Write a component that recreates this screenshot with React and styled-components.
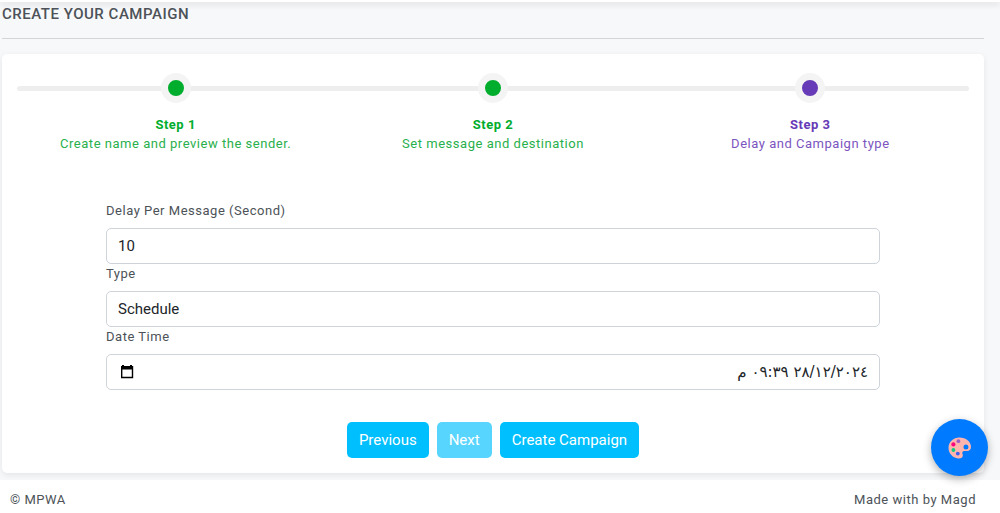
import React, { useState } from "react";
import styled, { createGlobalStyle, ThemeProvider } from "styled-components";

const theme = {
  colors: {
    page: "#f7f8fa",
    text: "#4c5258",
    input: "#212529",
    border: "#ced4da",
    done: "#00ad2d",
    doneText: "#28b04c",
    active: "#673ab7",
    activeText: "#7d55c0",
    info: "#00bfff",
  },
};

const GlobalStyle = createGlobalStyle`
  *,
  *::before,
  *::after {
    box-sizing: border-box;
  }

  body {
    margin: 0;
    background-color: ${theme.colors.page};
    color: ${theme.colors.text};
    font-family: Roboto, "DejaVu Sans", sans-serif;
    font-size: 13px;
    line-height: 19px;
    letter-spacing: 0.04em;
  }
`;

const Page = styled.div`
  display: flex;
  flex-direction: column;
  min-height: 100vh;
`;

const TopBar = styled.header`
  height: 2px;
  background-color: white;
  box-shadow: 0 2px 6px rgba(0, 0, 0, 0.2);
`;

const Content = styled.main`
  flex: 1;
  padding: 2px 16px 7px 2px;
`;

const PageTitle = styled.h6`
  margin: 0;
  padding-bottom: 14px;
  border-bottom: 1px solid #d3d6d9;
  font-size: 15px;
  line-height: 20px;
  font-weight: 500;
  text-transform: uppercase;
`;

const Card = styled.section`
  margin-top: 15px;
  padding: 19px 15px 15px;
  border-radius: 5px;
  background-color: white;
  box-shadow: 0 2px 6px rgba(0, 0, 0, 0.08);
`;

const StepList = styled.ol`
  position: relative;
  display: grid;
  grid-template-columns: repeat(3, 1fr);
  margin: 0;
  padding: 0;
  list-style: none;

  &::before {
    content: "";
    position: absolute;
    top: 13px;
    left: 0;
    right: 0;
    height: 5px;
    border-radius: 3px;
    background-color: #eeeeee;
  }
`;

const StepItem = styled.li`
  position: relative;
  display: flex;
  flex-direction: column;
  align-items: center;
  text-align: center;
  color: ${(props) =>
    props.$active ? props.theme.colors.activeText : props.theme.colors.doneText};
`;

const StepDot = styled.span`
  width: 30px;
  height: 30px;
  margin-bottom: 12px;
  border: 7px solid #f4f4f4;
  border-radius: 50%;
  background-color: ${(props) =>
    props.$active ? props.theme.colors.active : props.theme.colors.done};
`;

const StepName = styled.strong`
  font-weight: 700;
  color: ${(props) =>
    props.$active ? props.theme.colors.active : props.theme.colors.done};
`;

const Form = styled.form`
  padding: 48px 89px 0;
`;

const Label = styled.label`
  display: block;
  margin-bottom: 8px;
`;

const Input = styled.input`
  display: block;
  width: 100%;
  height: 36px;
  padding: 0 11px;
  border: 1px solid ${(props) => props.theme.colors.border};
  border-radius: 5px;
  background-color: white;
  color: ${(props) => props.theme.colors.input};
  font-family: inherit;
  font-size: 15px;
`;

const Select = styled(Input)`
  appearance: none;
`;

const DateField = styled.div`
  display: flex;
  align-items: center;
  height: 36px;
  padding: 0 11px;
  border: 1px solid ${(props) => props.theme.colors.border};
  border-radius: 5px;
  background-color: white;
`;

const DateInput = styled.input`
  flex: 1;
  min-width: 0;
  padding: 0;
  border: none;
  background: none;
  color: ${(props) => props.theme.colors.input};
  font-family: "DejaVu Sans", sans-serif;
  font-size: 15px;
`;

const PickerButton = styled.button`
  display: flex;
  padding: 0;
  border: none;
  background: none;
  color: black;
  cursor: pointer;
`;

const ButtonRow = styled.div`
  display: flex;
  justify-content: center;
  gap: 8px;
  margin-top: 32px;
`;

const Button = styled.button`
  height: 36px;
  padding: 0 12px;
  border: none;
  border-radius: 5px;
  background-color: ${(props) => props.theme.colors.info};
  color: white;
  font-family: inherit;
  font-size: 15px;
  cursor: pointer;

  &:disabled {
    opacity: 0.65;
    cursor: default;
  }
`;

const Footer = styled.footer`
  display: flex;
  justify-content: space-between;
  padding: 10px 24px 4px 10px;
  background-color: white;
`;

const ThemeButton = styled.button`
  position: fixed;
  right: 12px;
  bottom: 37px;
  display: flex;
  align-items: center;
  justify-content: center;
  width: 57px;
  height: 57px;
  padding: 0;
  border: none;
  border-radius: 50%;
  background-color: #007bff;
  box-shadow: 0 3px 8px rgba(0, 0, 0, 0.3);
  cursor: pointer;
`;

const CalendarIcon = () => (
  <svg width="18" height="18" viewBox="0 0 18 18" aria-hidden="true">
    <path
      fill="currentColor"
      fillRule="evenodd"
      d="M4 2h2v1h6V2h2v1h1.2v12.2H3V3h1V2zM4.4 6.4v7.4h9.4V6.4H4.4z"
    />
  </svg>
);

const PaletteIcon = () => (
  <svg width="24" height="24" viewBox="0 0 24 24" aria-hidden="true">
    <path
      fill="#ffb5ae"
      fillRule="evenodd"
      d="M11.5 1.5C5.4 1.5 .5 6 .5 11.8c0 6 4.8 10.7 10.3 10.7 2.5 0 4-1.1 4-2.9 0-1.2-.5-1.8-.5-2.8 0-1.2 1-1.7 2.4-1.7h2.3c2.300 0 4-1.500 4-4C23 5.400 17.800 1.500 11.500 1.500zM18 8.600a2.500 2.500 0 1 0 0 5 2.500 2.500 0 0 0 0-5z"
    />
    <circle cx="10.4" cy="5.2" r="1.9" fill="#a05fc4" />
    <circle cx="5.4" cy="8.4" r="2.1" fill="#f8077e" />
    <circle cx="5.4" cy="14" r="1.9" fill="#12c882" />
    <circle cx="9.8" cy="17.6" r="1.9" fill="#3b5df0" />
  </svg>
);

const steps = [
  { name: "Step 1", info: "Create name and preview the sender." },
  { name: "Step 2", info: "Set message and destination" },
  { name: "Step 3", info: "Delay and Campaign type" },
];

const Steps = ({ current }) => (
  <StepList>
    {steps.map((step, index) => (
      <StepItem key={step.name} $active={index === current}>
        <StepDot $active={index === current} />
        <StepName $active={index === current}>{step.name}</StepName>
        <span>{step.info}</span>
      </StepItem>
    ))}
  </StepList>
);

const CampaignForm = () => {
  const [delay, setDelay] = useState("10");
  const [type, setType] = useState("schedule");
  const [date, setDate] = useState("٢٨/١٢/٢٠٢٤ ٠٩:٣٩ م");

  return (
    <Form onSubmit={(e) => e.preventDefault()}>
      <Label htmlFor="delay">Delay Per Message (Second)</Label>
      <Input id="delay" value={delay} onChange={(e) => setDelay(e.target.value)} />
      <Label htmlFor="type">Type</Label>
      <Select
        as="select"
        id="type"
        value={type}
        onChange={(e) => setType(e.target.value)}
      >
        <option value="now">Immediately</option>
        <option value="schedule">Schedule</option>
      </Select>
      <Label htmlFor="datetime">Date Time</Label>
      <DateField>
        <PickerButton type="button" aria-label="Open calendar">
          <CalendarIcon />
        </PickerButton>
        <DateInput
          id="datetime"
          dir="rtl"
          value={date}
          onChange={(e) => setDate(e.target.value)}
        />
      </DateField>
      <ButtonRow>
        <Button type="button">Previous</Button>
        <Button type="button" disabled>
          Next
        </Button>
        <Button type="submit">Create Campaign</Button>
      </ButtonRow>
    </Form>
  );
};

const App = () => (
  <ThemeProvider theme={theme}>
    <GlobalStyle />
    <Page>
      <TopBar />
      <Content>
        <PageTitle>Create your campaign</PageTitle>
        <Card>
          <Steps current={2} />
          <CampaignForm />
        </Card>
      </Content>
      <Footer>
        <span>© MPWA</span>
        <span>Made with by Magd</span>
      </Footer>
      <ThemeButton type="button" aria-label="Change theme">
        <PaletteIcon />
      </ThemeButton>
    </Page>
  </ThemeProvider>
);

export default App;
